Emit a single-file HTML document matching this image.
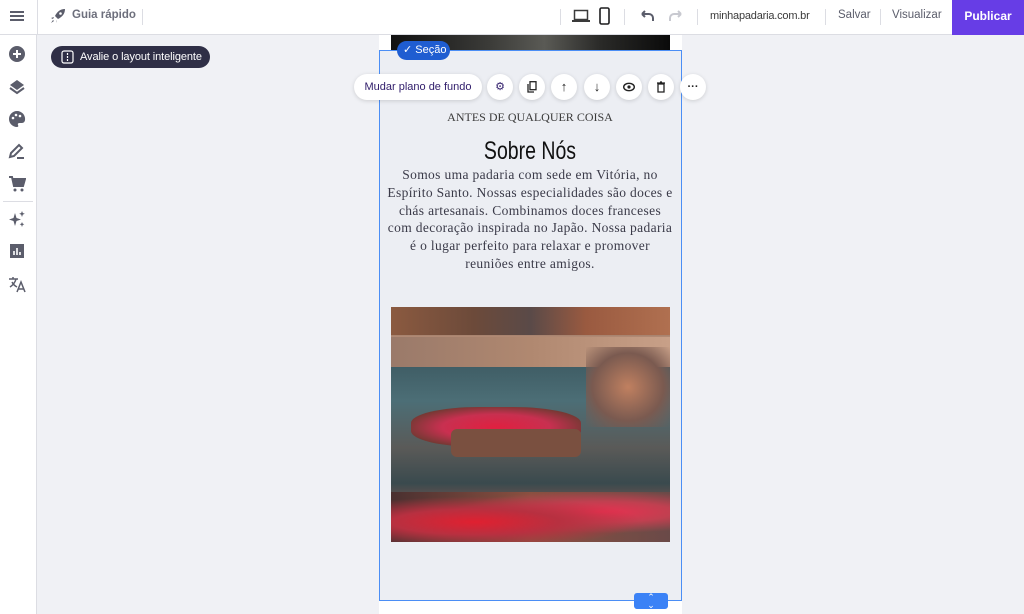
<!DOCTYPE html>
<html><head><meta charset="utf-8"><style>
*{margin:0;padding:0;box-sizing:border-box}
body{width:1024px;height:614px;overflow:hidden;background:#f0f1f5;font-family:"Liberation Sans",sans-serif;position:relative}
.top{position:absolute;left:0;top:0;width:1024px;height:35px;background:#fff;border-bottom:1px solid #dcdde3}
.side{position:absolute;left:0;top:35px;width:37px;height:579px;background:#fff;border-right:1px solid #dcdde3}
.ic{position:absolute;left:8px;width:18px;height:18px}
.t{position:absolute;font-size:11.5px;color:#5b5d6b;white-space:nowrap}
.sep{position:absolute;top:9px;width:1px;height:16px;background:#dcdde3}
.pub{position:absolute;right:0;top:0;width:72px;height:35px;background:#673de6;color:#fff;font-weight:bold;font-size:12px;text-align:center;line-height:32px}
.page{position:absolute;left:379px;top:35px;width:303px;height:579px;background:#fff}
.sec{position:absolute;left:379px;top:50px;width:303px;height:551px;background:#eceef3;border:1px solid #4b8ef5}
.chip{position:absolute;left:397px;top:41px;width:53px;height:19px;background:#1f5dd1;border-radius:10px;color:#fff;font-size:11px;line-height:19px;padding-left:6px;white-space:nowrap}
.btn{position:absolute;top:74px;height:26px;background:#fff;border-radius:13px;box-shadow:0 1px 4px rgba(0,0,0,.15);font-size:11px;color:#2f1c6a;text-align:center;line-height:26px;white-space:nowrap}
.rb{width:26px}
.serif{font-family:"Liberation Serif",serif;color:#3a3a3a;text-align:center;position:absolute;white-space:nowrap}
</style></head><body>
<div class="top">
 <div style="position:absolute;left:10px;top:11px;width:14px;height:2px;background:#5b5d6b;box-shadow:0 4px 0 #5b5d6b,0 8px 0 #5b5d6b"></div>
 <div style="position:absolute;left:37px;top:0;width:1px;height:35px;background:#dcdde3"></div>
 <svg style="position:absolute;left:50px;top:8px" width="16" height="16" viewBox="0 0 16 16"><path d="M15 1C10 1 7 4 5 8l3 3c4-2 7-5 7-10zM4 9l-3 1 2 1zM7 12l-1 3 1-2zM3 12l-2 3 3-2z" fill="#5b5d6b"/><circle cx="10.5" cy="5.5" r="1.3" fill="#fff"/></svg>
 <div class="t" style="left:72px;top:9px;font-weight:bold;color:#6d6f7c">Guia rápido</div>
 <div class="sep" style="left:142px"></div>
 <div class="sep" style="left:560px"></div>
 <svg style="position:absolute;left:572px;top:9px" width="18" height="14"><rect x="2.5" y="1.5" width="13" height="9" fill="none" stroke="#3a3a3a" stroke-width="1.5"/><rect x="0" y="11" width="18" height="2" fill="#3a3a3a"/></svg>
 <svg style="position:absolute;left:599px;top:7px" width="11" height="18"><rect x="1" y="1" width="9" height="16" rx="1.5" fill="none" stroke="#1d1d1f" stroke-width="1.6"/></svg>
 <div class="sep" style="left:624px"></div>
 <svg style="position:absolute;left:638px;top:10px" width="16" height="12"><path d="M4 4h7a4 4 0 0 1 4 4v3M4 4l3-3M4 4l3 3" fill="none" stroke="#5b5d6b" stroke-width="2"/></svg>
 <svg style="position:absolute;left:669px;top:10px" width="16" height="12"><path d="M12 4H5a4 4 0 0 0-4 4v3M12 4L9 1M12 4L9 7" fill="none" stroke="#c8c9d0" stroke-width="2"/></svg>
 <div class="sep" style="left:697px"></div>
 <div class="t" style="left:710px;top:10px;color:#3a3a3a;font-size:11px;letter-spacing:-.2px">minhapadaria.com.br</div>
 <div class="sep" style="left:825px"></div>
 <div class="t" style="left:838px;top:9px">Salvar</div>
 <div class="sep" style="left:880px"></div>
 <div class="t" style="left:892px;top:9px">Visualizar</div>
 <div class="pub">Publicar</div>
</div>
<div class="side">
 <svg class="ic" style="top:10px" viewBox="0 0 18 18"><circle cx="9" cy="9" r="8" fill="#5b5d6b"/><path d="M9 5v8M5 9h8" stroke="#fff" stroke-width="2"/></svg>
 <svg class="ic" style="top:43px" viewBox="0 0 18 18"><path d="M9 2l7 5-7 5-7-5z" fill="#5b5d6b"/><path d="M2 10l7 5 7-5" fill="none" stroke="#5b5d6b" stroke-width="2"/></svg>
 <svg class="ic" style="top:75px" viewBox="0 0 18 18"><path d="M9 1a8 8 0 0 0 0 16c1.5 0 1.5-1 1-2s0-2 1.5-2H14a3 3 0 0 0 3-3A8 8 0 0 0 9 1z" fill="#5b5d6b"/><circle cx="5" cy="8" r="1.3" fill="#fff"/><circle cx="8" cy="5" r="1.3" fill="#fff"/><circle cx="12" cy="6" r="1.3" fill="#fff"/></svg>
 <svg class="ic" style="top:108px" viewBox="0 0 18 18"><path d="M2 14l1-4 8-8 3 3-8 8z" fill="none" stroke="#5b5d6b" stroke-width="2"/><path d="M9 15h7" stroke="#5b5d6b" stroke-width="2"/></svg>
 <svg class="ic" style="top:140px" viewBox="0 0 18 18"><path d="M1 2h3l2 9h9l2-7H5" fill="none" stroke="#5b5d6b" stroke-width="2"/><rect x="5" y="4" width="11" height="6" fill="#5b5d6b"/><circle cx="7" cy="15" r="1.5" fill="#5b5d6b"/><circle cx="14" cy="15" r="1.5" fill="#5b5d6b"/></svg>
 <div style="position:absolute;left:3px;top:166px;width:30px;height:1px;background:#dcdde3"></div>
 <svg class="ic" style="top:175px" viewBox="0 0 18 18"><path d="M7 3l1.5 5L13 9.5 8.5 11 7 16 5.5 11 1 9.5 5.5 8z" fill="#5b5d6b"/><path d="M14 1l.8 2 2 .8-2 .8L14 7l-.8-2.4-2-.8 2-.8zM14 12l.7 1.6 1.6.7-1.6.7L14 17l-.7-2-1.6-.7 1.6-.7z" fill="#5b5d6b"/></svg>
 <svg class="ic" style="top:207px" viewBox="0 0 18 18"><rect x="2" y="2" width="14" height="14" fill="#5b5d6b"/><path d="M6 13V9M9 13V6M12 13v-3" stroke="#fff" stroke-width="1.6"/></svg>
 <svg class="ic" style="top:240px" viewBox="0 0 18 18"><path d="M1 4h9M5 2v2M8 4c-1 4-3 6-6 8M4 7c1 2 3 4 5 5M9 17l4-10 4 10M10.5 14h5" fill="none" stroke="#5b5d6b" stroke-width="1.5"/></svg>
</div>
<div style="position:absolute;left:51px;top:46px;width:159px;height:22px;background:#2f2f46;border-radius:11px;color:#fff;font-size:11px;line-height:22px;padding-left:29px;white-space:nowrap;letter-spacing:-.1px">Avalie o layout inteligente
 <svg style="position:absolute;left:10px;top:4px" width="13" height="14"><rect x="1" y="1" width="11" height="12" rx="2" fill="none" stroke="#fff" stroke-width="1.2"/><path d="M6.5 3v8" stroke="#fff" stroke-width="1.2" stroke-dasharray="2 1"/></svg></div>
<div class="page"></div>
<div style="position:absolute;left:391px;top:35px;width:279px;height:16px;background:linear-gradient(90deg,#111 0%,#3b3b38 35%,#5a5a55 55%,#2a2a28 75%,#0a0a0a)"></div>
<div class="sec"></div>
<div class="chip">✓ Seção</div>
<div class="btn" style="left:354px;width:128px">Mudar plano de fundo</div>
<div class="btn rb" style="left:487px">⚙</div>
<div class="btn rb" style="left:519px"><svg width="10" height="12" style="margin-top:7px"><rect x="3" y="0.7" width="6" height="8" fill="none" stroke="#222" stroke-width="1.3"/><path d="M1 3v8h6" fill="none" stroke="#222" stroke-width="1.3"/></svg></div>
<div class="btn rb" style="left:551px;font-size:13px;color:#222">↑</div>
<div class="btn rb" style="left:584px;font-size:13px;color:#222">↓</div>
<div class="btn rb" style="left:616px"><svg width="12" height="10" style="margin-top:8px"><ellipse cx="6" cy="5" rx="5.3" ry="3.7" fill="none" stroke="#222" stroke-width="1.4"/><circle cx="6" cy="5" r="1.6" fill="#222"/></svg></div>
<div class="btn rb" style="left:648px"><svg width="10" height="12" style="margin-top:7px"><path d="M1 2h8M4 1h2M2 3h6v8H2z" fill="none" stroke="#222" stroke-width="1.3"/></svg></div>
<div class="btn rb" style="left:680px;font-weight:bold;color:#222">···</div>
<div class="serif" style="left:380px;width:300px;top:110px;font-size:12px">ANTES DE QUALQUER COISA</div>
<div style="position:absolute;left:380px;width:300px;top:137px;text-align:center;font-family:'Liberation Sans',sans-serif;font-size:25px;color:#111;transform:scaleX(.78);transform-origin:center">Sobre Nós</div>
<div class="serif" style="left:380px;width:300px;top:166px;font-size:13.5px;line-height:17.8px;color:#3a3a48;letter-spacing:.35px">Somos uma padaria com sede em Vitória, no<br>Espírito Santo. Nossas especialidades são doces e<br>chás artesanais. Combinamos doces franceses<br>com decoração inspirada no Japão. Nossa padaria<br>é o lugar perfeito para relaxar e promover<br>reuniões entre amigos.</div>
<div style="position:absolute;left:391px;top:307px;width:279px;height:235px;overflow:hidden;background:linear-gradient(180deg,#6b5448 0%,#8a6a58 10%,#c59a83 14%,#a07d6a 20%,#3d5a62 22%,#4c6e76 40%,#5a5a58 60%,#3a4a4e 75%,#7a5550 85%,#4a3a38 100%)">
 <div style="position:absolute;left:0;top:0;width:279px;height:28px;background:linear-gradient(90deg,#8b5a40,#6c4a3a 30%,#5a4a48 50%,#9a5a40 70%,#b07050)"></div>
 <div style="position:absolute;left:0;top:30px;width:279px;height:30px;background:linear-gradient(90deg,#9a7a6a,#b08870 50%,#c8a088)"></div>
 <div style="position:absolute;left:20px;top:100px;width:170px;height:40px;border-radius:40%;background:radial-gradient(ellipse,#e02040 0%,#c83050 45%,#6a3a30 80%,transparent)"></div>
 <div style="position:absolute;left:60px;top:122px;width:130px;height:28px;background:#7a5040;border-radius:6px"></div>
 <div style="position:absolute;left:195px;top:40px;width:84px;height:80px;background:radial-gradient(ellipse,#c08060,#7a5a50 60%,transparent)"></div>
 <div style="position:absolute;left:0;top:185px;width:279px;height:50px;background:radial-gradient(ellipse at 30% 60%,#e02030 0%,#b83040 30%,transparent 60%),radial-gradient(ellipse at 75% 40%,#e83050 0%,#c04050 25%,transparent 50%),linear-gradient(90deg,#4a3030,#8a5040 50%,#6a4a48)"></div>
</div>
<div style="position:absolute;left:634px;top:593px;width:34px;height:16px;background:#3b82f6;border-radius:3px;color:#fff;font-size:9px;text-align:center;line-height:8px">⌃<br>⌄</div>
</body></html>
